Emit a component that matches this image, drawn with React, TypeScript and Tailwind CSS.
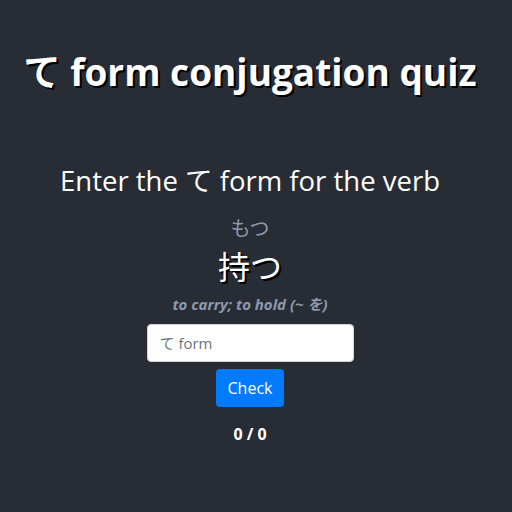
import React from "react";

export default function App() {
  const font = { fontFamily: '"Open Sans", "Noto Sans CJK JP", sans-serif' };
  return (
    <div className="w-[512px] h-[512px] bg-[#282c34]">
      <div className="w-[500px] text-white flex flex-col items-center" style={font}>
        <h1 className="mt-[50px] text-[37px] font-bold leading-[44px] [text-shadow:2px_2px_0_#000]">て form conjugation quiz</h1>
        <p className="mt-[70px] text-[27.5px] leading-[34px]">Enter the て form for the verb</p>
        <p className="mt-[18px] text-[20px] leading-[26px] text-[#8d99ae]">もつ</p>
        <p className="mt-[5px] text-[32px] leading-[40px] [text-shadow:2px_2px_0_#000]">持つ</p>
        <p className="mt-[7px] text-[15px] leading-[20px] italic font-bold text-[#8d99ae]">to carry; to hold (~ を)</p>
        <input
          className="mt-[10px] w-[207px] h-[38px] rounded-[4px] border border-[#ced4da] bg-white px-[12px] text-[15px] text-[#495057] placeholder:text-[#6c757d] outline-none"
          placeholder="て form"
        />
        <button className="mt-[7px] h-[38px] px-[12px] rounded-[4px] bg-[#007bff] text-white text-[16px]">Check</button>
        <p className="mt-[16px] text-[16px] font-bold leading-[22px]">0 / 0</p>
      </div>
    </div>
  );
}
